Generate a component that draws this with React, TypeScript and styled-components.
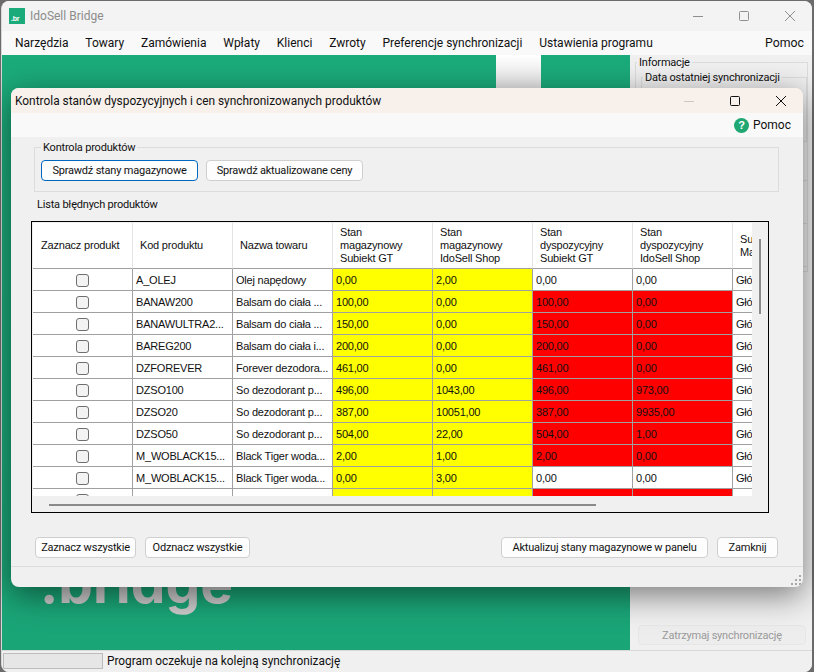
import React from "react";
import styled, { createGlobalStyle } from "styled-components";

const menuItems = ["Narzędzia", "Towary", "Zamówienia", "Wpłaty", "Klienci", "Zwroty", "Preferencje synchronizacji", "Ustawienia programu"];

type Tone = "plain" | "warn" | "bad";

interface Product {
  code: string;
  name: string;
  stockGt: string;
  stockShop: string;
  dispGt: string;
  dispShop: string;
  dispTone: Tone;
}

const products: Product[] = [
  { code: "A_OLEJ", name: "Olej napędowy", stockGt: "0,00", stockShop: "2,00", dispGt: "0,00", dispShop: "0,00", dispTone: "plain" },
  { code: "BANAW200", name: "Balsam do ciała ...", stockGt: "100,00", stockShop: "0,00", dispGt: "100,00", dispShop: "0,00", dispTone: "bad" },
  { code: "BANAWULTRA2...", name: "Balsam do ciała ...", stockGt: "150,00", stockShop: "0,00", dispGt: "150,00", dispShop: "0,00", dispTone: "bad" },
  { code: "BAREG200", name: "Balsam do ciała i...", stockGt: "200,00", stockShop: "0,00", dispGt: "200,00", dispShop: "0,00", dispTone: "bad" },
  { code: "DZFOREVER", name: "Forever dezodora...", stockGt: "461,00", stockShop: "0,00", dispGt: "461,00", dispShop: "0,00", dispTone: "bad" },
  { code: "DZSO100", name: "So dezodorant p...", stockGt: "496,00", stockShop: "1043,00", dispGt: "496,00", dispShop: "973,00", dispTone: "bad" },
  { code: "DZSO20", name: "So dezodorant p...", stockGt: "387,00", stockShop: "10051,00", dispGt: "387,00", dispShop: "9935,00", dispTone: "bad" },
  { code: "DZSO50", name: "So dezodorant p...", stockGt: "504,00", stockShop: "22,00", dispGt: "504,00", dispShop: "1,00", dispTone: "bad" },
  { code: "M_WOBLACK15...", name: "Black Tiger woda...", stockGt: "2,00", stockShop: "1,00", dispGt: "2,00", dispShop: "0,00", dispTone: "bad" },
  { code: "M_WOBLACK15...", name: "Black Tiger woda...", stockGt: "0,00", stockShop: "3,00", dispGt: "0,00", dispShop: "0,00", dispTone: "plain" },
  { code: "M_WOBLACK15...", name: "Black Tiger woda...", stockGt: "0,00", stockShop: "0,00", dispGt: "0,00", dispShop: "0,00", dispTone: "bad" },
];

const headers = [
  "Zaznacz produkt",
  "Kod produktu",
  "Nazwa towaru",
  "Stan\nmagazynowy\nSubiekt GT",
  "Stan\nmagazynowy\nIdoSell Shop",
  "Stan\ndyspozycyjny\nSubiekt GT",
  "Stan\ndyspozycyjny\nIdoSell Shop",
  "Subiekt\nMagazyn",
];

const WinControls = ({ dim }: { dim?: boolean }) => (
  <Controls>
    <svg width="12" height="12" viewBox="0 0 12 12">
      <path d="M1 6.5h10" stroke={dim ? "#8f8f8f" : "#c8c8c8"} fill="none" />
    </svg>
    <svg width="12" height="12" viewBox="0 0 12 12">
      <rect x="1.5" y="1.5" width="9" height="9" rx="1" stroke={dim ? "#8f8f8f" : "#111"} fill="none" />
    </svg>
    <svg width="12" height="12" viewBox="0 0 12 12">
      <path d="M1 1l10 10M11 1L1 11" stroke={dim ? "#8f8f8f" : "#111"} fill="none" />
    </svg>
  </Controls>
);

const App = () => {
  return (
    <Desktop>
      <GlobalStyle />
      <MainWindow>
        <TitleBar>
          <AppLogo>.br</AppLogo>
          <AppTitle>IdoSell Bridge</AppTitle>
          <WinControls dim />
        </TitleBar>
        <MenuBar>
          {menuItems.map((item) => (
            <MenuItem key={item}>{item}</MenuItem>
          ))}
          <MenuHelp>Pomoc</MenuHelp>
        </MenuBar>
        <Body>
          <Brand>
            <BrandStripe />
            <BrandText>.bridge</BrandText>
          </Brand>
          <SidePanel>
            <SideGroup>
              <SideLegend>Informacje</SideLegend>
              <SideGroup>
                <SideLegend>Data ostatniej synchronizacji</SideLegend>
                <SideFill $h={56} />
              </SideGroup>
              <SideFill $h={34} />
              <SideRule />
              <SideFill $h={34} />
              <SideRule />
              <SideFill $h={34} />
              <SideRule />
            </SideGroup>
            <SideSpacer />
            <StopButton disabled>Zatrzymaj synchronizację</StopButton>
          </SidePanel>
        </Body>
        <StatusBar>
          <StatusBox />
          <span>Program oczekuje na kolejną synchronizację</span>
        </StatusBar>
      </MainWindow>

      <Dialog>
        <DialogTitle>
          <span>Kontrola stanów dyspozycyjnych i cen synchronizowanych produktów</span>
          <WinControls />
        </DialogTitle>
        <DialogTools>
          <HelpIcon>?</HelpIcon>
          <HelpLabel>Pomoc</HelpLabel>
        </DialogTools>
        <DialogContent>
          <CheckGroup>
            <CheckLegend>Kontrola produktów</CheckLegend>
            <Button $w={157} $focus>Sprawdź stany magazynowe</Button>
            <Button $w={157}>Sprawdź aktualizowane ceny</Button>
          </CheckGroup>
          <ListLabel>Lista błędnych produktów</ListLabel>
          <GridFrame>
            <GridView>
              <Table>
                <thead>
                  <tr>
                    {headers.map((h) => (
                      <HeadCell key={h}>{h}</HeadCell>
                    ))}
                  </tr>
                </thead>
                <tbody>
                  {products.map((p, i) => (
                    <tr key={i}>
                      <Cell $center>
                        <CheckBox />
                      </Cell>
                      <Cell>{p.code}</Cell>
                      <Cell>{p.name}</Cell>
                      <Cell $tone="warn">{p.stockGt}</Cell>
                      <Cell $tone="warn">{p.stockShop}</Cell>
                      <Cell $tone={p.dispTone}>{p.dispGt}</Cell>
                      <Cell $tone={p.dispTone}>{p.dispShop}</Cell>
                      <Cell>Główny</Cell>
                    </tr>
                  ))}
                </tbody>
              </Table>
            </GridView>
            <VScroll>
              <VThumb />
            </VScroll>
            <HScroll>
              <HThumb />
            </HScroll>
          </GridFrame>
          <Actions>
            <Button $w={101}>Zaznacz wszystkie</Button>
            <Button $w={105}>Odznacz wszystkie</Button>
            <ActionSpacer />
            <Button $w={207}>Aktualizuj stany magazynowe w panelu</Button>
            <Button $w={61}>Zamknij</Button>
          </Actions>
        </DialogContent>
        <DialogStatus>
          <Grip width="12" height="12" viewBox="0 0 12 12">
            <path d="M9 1h2v2H9zM5 5h2v2H5zM9 5h2v2H9zM1 9h2v2H1zM5 9h2v2H5zM9 9h2v2H9z" fill="#a8a8a8" />
          </Grip>
        </DialogStatus>
      </Dialog>
    </Desktop>
  );
};

export default App;

const GlobalStyle = createGlobalStyle`
  html, body {
    margin: 0;
    padding: 0;
    background: #6b6b6b;
  }
  * {
    box-sizing: border-box;
  }
`;

const uiFont = `"Roboto", "Liberation Sans", sans-serif`;
const gridFont = `"Liberation Sans", sans-serif`;

const Desktop = styled.div`
  position: relative;
  width: 814px;
  height: 672px;
  overflow: hidden;
  padding: 1px 2px 0 1px;
  font-family: ${uiFont};
  font-size: 11px;
  letter-spacing: -0.2px;
  color: #111;
`;

const MainWindow = styled.div`
  width: 100%;
  height: 100%;
  display: flex;
  flex-direction: column;
  background: #f0f0f0;
  border-radius: 8px;
  overflow: hidden;
  border-left: 1px solid #d8d8d8;
`;

const TitleBar = styled.div`
  height: 30px;
  flex: none;
  display: flex;
  align-items: center;
  padding-left: 7px;
  background: #f3f3f3;
`;

const AppLogo = styled.div`
  width: 16px;
  height: 16px;
  background: #1bab7a;
  color: #fff;
  font: 700 7px ${gridFont};
  display: flex;
  align-items: flex-end;
  padding: 0 0 2px 2px;
`;

const AppTitle = styled.div`
  margin-left: 5px;
  font-size: 12px;
  letter-spacing: 0;
  color: #8c8c8c;
  flex: 1;
`;

const Controls = styled.div`
  display: flex;
  align-items: center;
  gap: 34px;
  padding-right: 16px;
`;

const MenuBar = styled.div`
  height: 24px;
  flex: none;
  display: flex;
  align-items: center;
  gap: 16.8px;
  padding: 0 8px 1px 13px;
  background: #f9f9f9;
  font-size: 12px;
  letter-spacing: 0;
`;

const MenuItem = styled.span`
  white-space: nowrap;
`;

const MenuHelp = styled(MenuItem)`
  margin-left: auto;
  font-size: 12.3px;
`;

const Body = styled.div`
  flex: 1;
  min-height: 0;
  display: flex;
`;

const Brand = styled.div`
  position: relative;
  width: 628px;
  flex: none;
  background: linear-gradient(#1bab7a, #1aa577);
  overflow: hidden;
`;

const BrandStripe = styled.div`
  position: absolute;
  left: 494px;
  top: 0;
  width: 45px;
  height: 60px;
  background: linear-gradient(#ffffff, #cfcfcf);
`;

const BrandText = styled.div`
  position: absolute;
  left: 38px;
  top: 501px;
  font: 700 55px "Inter", sans-serif;
  letter-spacing: 0;
  color: #cdcdcd;
  line-height: 1;
`;

const SidePanel = styled.div`
  flex: 1;
  display: flex;
  flex-direction: column;
  padding: 0 4px 5px 5px;
`;

const SideGroup = styled.fieldset`
  margin: 0;
  padding: 0;
  border: 1px solid #dcdcdc;
  & & {
    margin: 0 0 0 5px;
  }
`;

const SideLegend = styled.legend`
  padding: 0 2px;
  margin-left: 1px;
  line-height: 15px;
`;

const SideFill = styled.div<{ $h: number }>`
  height: ${({ $h }) => $h}px;
`;

const SideRule = styled.div`
  height: 1px;
  background: #dcdcdc;
  margin: 4px 0;
`;

const SideSpacer = styled.div`
  flex: 1;
`;

const StopButton = styled.button`
  height: 20px;
  margin: 0 2px 0 3px;
  border: 1px solid #e6e6e6;
  border-radius: 4px;
  background: #ededed;
  color: #9a9a9a;
  font: 11px ${uiFont};
  letter-spacing: -0.2px;
  padding: 0;
`;

const StatusBar = styled.div`
  height: 22px;
  flex: none;
  display: flex;
  align-items: center;
  gap: 4px;
  padding: 0 0 2px 1px;
  border-top: 1px solid #d8d8d8;
  background: #f0f0f0;
  font-size: 11.85px;
  letter-spacing: 0;
`;

const StatusBox = styled.div`
  width: 100px;
  height: 16px;
  background: #e6e6e6;
  border: 1px solid #bcbcbc;
`;

const Dialog = styled.div`
  position: absolute;
  left: 11px;
  top: 88px;
  width: 792px;
  height: 499px;
  display: flex;
  flex-direction: column;
  background: #f0f0f0;
  border-radius: 8px;
  overflow: hidden;
  box-shadow: 0 8px 32px rgba(0, 0, 0, 0.5);
`;

const DialogTitle = styled.div`
  height: 25px;
  flex: none;
  display: flex;
  align-items: center;
  justify-content: space-between;
  padding-left: 4px;
  background: #f8f0eb;
  font-size: 11.9px;
  letter-spacing: 0;
`;

const DialogTools = styled.div`
  height: 24px;
  flex: none;
  display: flex;
  align-items: center;
  justify-content: flex-end;
  gap: 4px;
  padding-right: 12px;
  background: #f9f9f9;
`;

const HelpIcon = styled.div`
  width: 15px;
  height: 15px;
  border-radius: 50%;
  background: #1fa874;
  color: #fff;
  font: 700 11px ${gridFont};
  display: flex;
  align-items: center;
  justify-content: center;
`;

const HelpLabel = styled.span`
  font-size: 12px;
  letter-spacing: 0;
`;

const DialogContent = styled.div`
  flex: 1;
  min-height: 0;
  display: flex;
  flex-direction: column;
  padding: 0 24px 0 20px;
`;

const CheckGroup = styled.fieldset`
  margin: 3px 0 0 3px;
  padding: 5px 6px 0 6px;
  height: 52px;
  display: flex;
  gap: 8px;
  border: 1px solid #dcdcdc;
`;

const CheckLegend = styled.legend`
  padding: 0 2px;
  line-height: 15px;
`;

const Button = styled.button<{ $w: number; $focus?: boolean }>`
  width: ${({ $w }) => $w}px;
  height: 21px;
  flex: none;
  padding: 0;
  border-radius: 4px;
  border: 1px solid ${({ $focus }) => ($focus ? "#0067c0" : "#cfcfcf")};
  background: #fdfdfd;
  color: #111;
  font: 11px ${uiFont};
  letter-spacing: -0.2px;
  white-space: nowrap;
`;

const ListLabel = styled.div`
  margin: 5px 0 0 6px;
  line-height: 15px;
`;

const GridFrame = styled.div`
  margin-top: 9px;
  width: 738px;
  height: 292px;
  display: grid;
  grid-template-columns: 719px 1fr;
  grid-template-rows: 273px 1fr;
  border: 1px solid #000;
  padding: 1px;
  background: #f0f0f0;
`;

const GridView = styled.div`
  overflow: hidden;
  background: #fff;
`;

const Table = styled.table`
  width: 800px;
  table-layout: fixed;
  border-collapse: separate;
  border-spacing: 0;
  font: 11px ${gridFont};
  letter-spacing: -0.2px;
`;

const HeadCell = styled.th`
  width: 100px;
  height: 46px;
  padding: 0 7px;
  font-weight: 400;
  text-align: left;
  white-space: pre-line;
  line-height: 13px;
  background: #fff;
  border-right: 1px solid #e3e3e3;
  border-bottom: 1px solid #a0a0a0;

  &:first-child {
    padding-left: 8px;
  }
`;

const toneColors: Record<Tone, string> = {
  plain: "#ffffff",
  warn: "#ffff00",
  bad: "#ff0000",
};

const Cell = styled.td<{ $tone?: Tone; $center?: boolean }>`
  height: 22px;
  padding: 0 3px;
  white-space: nowrap;
  overflow: hidden;
  background: ${({ $tone }) => toneColors[$tone ?? "plain"]};
  text-align: ${({ $center }) => ($center ? "center" : "left")};
  border-right: 1px solid #a0a0a0;
  border-bottom: 1px solid #a0a0a0;
`;

const CheckBox = styled.span`
  display: block;
  width: 13px;
  height: 13px;
  margin: 1px auto 0;
  border: 1px solid #6e6e6e;
  border-radius: 3px;
  background: #f3f3f3;
`;

const VScroll = styled.div`
  padding: 16px 0 0 7px;
`;

const VThumb = styled.div`
  width: 2px;
  height: 75px;
  background: #8a8a8a;
`;

const HScroll = styled.div`
  padding: 8px 0 0 16px;
`;

const HThumb = styled.div`
  width: 547px;
  height: 2px;
  background: #8a8a8a;
`;

const Actions = styled.div`
  margin-top: 24px;
  display: flex;
  gap: 9px;
  padding: 0 1px 0 4px;
`;

const ActionSpacer = styled.div`
  flex: 1;
`;

const DialogStatus = styled.div`
  height: 21px;
  flex: none;
  border-top: 1px solid #dcdcdc;
  display: flex;
  justify-content: flex-end;
  align-items: flex-end;
`;

const Grip = styled.svg`
  margin: 0 1px 1px 0;
`;
